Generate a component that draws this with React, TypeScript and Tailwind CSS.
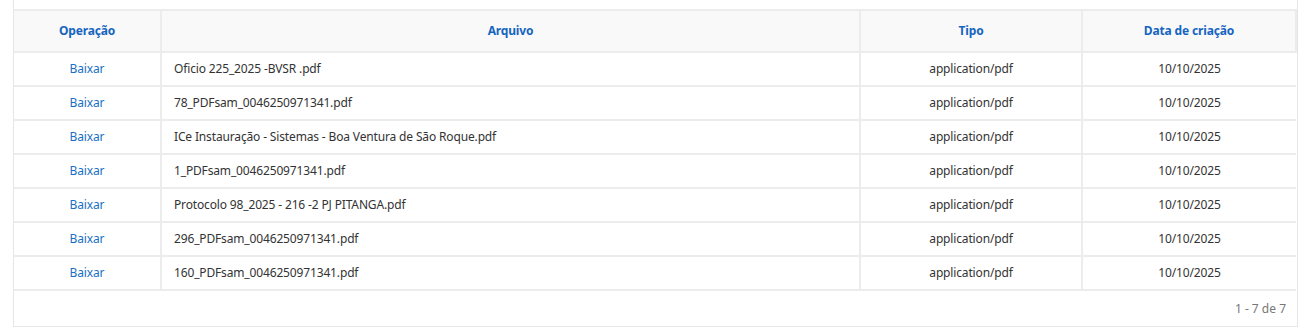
const files = [
  "Oficio 225_2025 -BVSR .pdf",
  "78_PDFsam_0046250971341.pdf",
  "ICe Instauração - Sistemas - Boa Ventura de São Roque.pdf",
  "1_PDFsam_0046250971341.pdf",
  "Protocolo 98_2025 - 216 -2 PJ PITANGA.pdf",
  "296_PDFsam_0046250971341.pdf",
  "160_PDFsam_0046250971341.pdf",
];

export default function App() {
  return (
    <div
      className="w-[1304px] h-[330px] bg-white pl-[13px] pr-[6px]"
      style={{ fontFamily: '"Noto Sans", "Open Sans", sans-serif' }}
    >
      <div className="border-x border-[#e6e6e6] border-b h-[327px] flex flex-col">
        <div className="h-[9px]" />
        <table className="w-full table-fixed border-collapse text-[12px] text-[#333] tracking-[-0.15px]">
          <colgroup>
            <col className="w-[147px]" />
            <col className="w-[699px]" />
            <col className="w-[222px]" />
            <col />
          </colgroup>
          <thead>
            <tr className="bg-[#f9f9f9] h-[42px]">
              {["Operação", "Arquivo", "Tipo", "Data de criação"].map((h) => (
                <th
                  key={h}
                  className="border-2 border-[#ececec] border-l-0 font-bold text-[#1565c0] text-center"
                >
                  {h}
                </th>
              ))}
            </tr>
          </thead>
          <tbody>
            {files.map((f) => (
              <tr key={f} className="h-[34px]">
                <td className="border-2 border-l-0 border-t-0 border-[#ececec] text-center text-[#1a6fc4]">
                  Baixar
                </td>
                <td className="border-2 border-l-0 border-t-0 border-[#ececec] pl-3">{f}</td>
                <td className="border-2 border-l-0 border-t-0 border-[#ececec] text-center">
                  application/pdf
                </td>
                <td className="border-2 border-l-0 border-t-0 border-r-0 border-[#ececec] text-center">
                  10/10/2025
                </td>
              </tr>
            ))}
          </tbody>
        </table>
        <div className="flex-1 flex items-center justify-end pr-[11px] text-[12px] text-[#777]">
          1 - 7 de 7
        </div>
      </div>
    </div>
  );
}
